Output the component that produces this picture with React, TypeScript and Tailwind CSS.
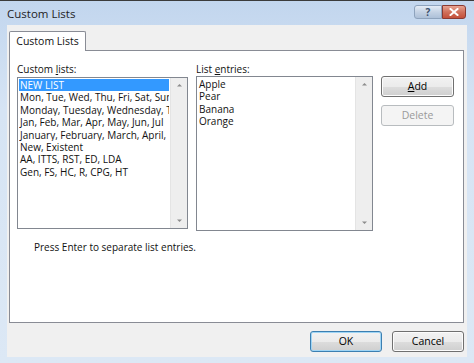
import React from 'react';

const listItems = [
  'NEW LIST',
  'Mon, Tue, Wed, Thu, Fri, Sat, Sun',
  'Monday, Tuesday, Wednesday, Thursday',
  'Jan, Feb, Mar, Apr, May, Jun, Jul',
  'January, February, March, April, May',
  'New, Existent',
  'AA, ITTS, RST, ED, LDA',
  'Gen, FS, HC, R, CPG, HT',
];

const entries = ['Apple', 'Pear', 'Banana', 'Orange'];

function ScrollBar() {
  return (
    <div className="flex w-[17px] shrink-0 flex-col justify-between border-l border-[#e4e4e4] bg-[#eeeeee] py-[4px]">
      <svg width="17" height="6" viewBox="0 0 17 6">
        <path d="M6 4.5 L8.5 2 L11 4.5 Z" fill="#8c8c8c" />
      </svg>
      <svg width="17" height="6" viewBox="0 0 17 6">
        <path d="M6 1.5 L8.5 4 L11 1.5 Z" fill="#8c8c8c" />
      </svg>
    </div>
  );
}

function WinButton({ children, variant = 'normal', className = '' }: { children: React.ReactNode; variant?: 'normal' | 'default' | 'disabled'; className?: string }) {
  const border =
    variant === 'default'
      ? 'border-[#3c7fb1] shadow-[inset_0_0_0_1px_#9fd5f5]'
      : variant === 'disabled'
      ? 'border-[#b8bcbf]'
      : 'border-[#707070] shadow-[inset_0_0_0_1px_#fcfcfc]';
  const bg =
    variant === 'disabled'
      ? 'bg-[#f4f4f4] text-[#9a9a9a]'
      : 'bg-[linear-gradient(#f2f2f2_0%,#ebebeb_50%,#dddddd_51%,#cfcfcf_100%)] text-black';
  return (
    <div className={`flex h-[21px] items-center justify-center rounded-[3px] border text-[10.5px] ${border} ${bg} ${className}`}>
      {children}
    </div>
  );
}

export default function App() {
  return (
    <div
      className="flex h-[363px] w-[474px] flex-col border-t border-[#3b3b3b] bg-[linear-gradient(#c2d6ee,#d6e4f4_30%,#dce8f5)] text-[10px] text-[#111]"
      style={{ fontFamily: '"Open Sans", "Noto Sans", sans-serif' }}
    >
      {/* Title bar */}
      <div className="flex h-[24px] shrink-0 items-start justify-between pl-[7px] pr-[8px]">
        <div className="pt-[5px] text-[11.5px] leading-[15px] text-[#1e1e1e]">Custom Lists</div>
        <div className="flex pt-[4px]">
          <div className="flex h-[14px] w-[28px] items-center justify-center rounded-l-[3px] border border-[#8ea3bd] bg-[linear-gradient(#e4ecf6,#c4d2e4_50%,#adc0d8)] text-[10px] font-bold leading-none text-[#3a4e6b]">
            ?
          </div>
          <div className="flex h-[14px] w-[24px] items-center justify-center rounded-r-[3px] border border-[#8a3a32] bg-[linear-gradient(#e8a493,#d0705b_50%,#c4503b)]">
            <svg width="10" height="8" viewBox="0 0 10 8">
              <path d="M1.5 1 L8.5 7 M8.5 1 L1.5 7" stroke="white" strokeWidth="2" strokeLinecap="square" />
            </svg>
          </div>
        </div>
      </div>

      {/* Client area */}
      <div className="mx-[7px] mb-[6px] flex flex-1 flex-col bg-[#f0f0f0] pl-[2px] pr-[3px] pt-[6px]">
        {/* Tab */}
        <div className="flex">
          <div className="relative z-10 -mb-px flex h-[20px] w-[77px] items-center justify-center rounded-t-[2px] border border-b-0 border-[#898c95] bg-white text-[10.5px]">
            Custom Lists
          </div>
        </div>

        {/* Tab panel */}
        <div className="h-[273px] border border-[#898c95] bg-white pl-[7px] pt-[11px]">
          <div className="flex">
            <div className="flex w-[171px] flex-col">
              <div className="h-[14px] leading-[14px]">
                Custom <span className="underline">l</span>ists:
              </div>
              <div className="mt-[1px] flex h-[152px] border border-[#828790] bg-white">
                <div className="flex-1 overflow-hidden px-[1px] pt-[1px]">
                  {listItems.map((item, i) => (
                    <div
                      key={item}
                      className={`h-[12.4px] overflow-hidden whitespace-nowrap px-[1px] leading-[12.4px] ${i === 0 ? 'bg-[#3399ff] text-white' : ''}`}
                    >
                      {item}
                    </div>
                  ))}
                </div>
                <ScrollBar />
              </div>
            </div>

            <div className="ml-[8px] flex w-[177px] flex-col">
              <div className="h-[14px] leading-[14px]">
                List <span className="underline">e</span>ntries:
              </div>
              <div className="flex h-[155px] border border-[#828790] bg-white">
                <div className="flex-1 overflow-hidden px-[2px] pt-[1px]">
                  {entries.map((e) => (
                    <div key={e} className="h-[12.4px] leading-[12.4px]">
                      {e}
                    </div>
                  ))}
                </div>
                <ScrollBar />
              </div>
            </div>

            <div className="ml-[8px] flex flex-col gap-[8px] pt-[14px]">
              <WinButton className="w-[73px]">
                <span className="underline">A</span>dd
              </WinButton>
              <WinButton variant="disabled" className="w-[73px]">
                Delete
              </WinButton>
            </div>
          </div>

          <div className="mt-[10px] pl-[17px] leading-[13px]">Press Enter to separate list entries.</div>
        </div>

        {/* Bottom buttons */}
        <div className="flex justify-end gap-[10px] pt-[8px]">
          <WinButton variant="default" className="w-[72px]">OK</WinButton>
          <WinButton className="w-[72px]">Cancel</WinButton>
        </div>
      </div>
    </div>
  );
}
